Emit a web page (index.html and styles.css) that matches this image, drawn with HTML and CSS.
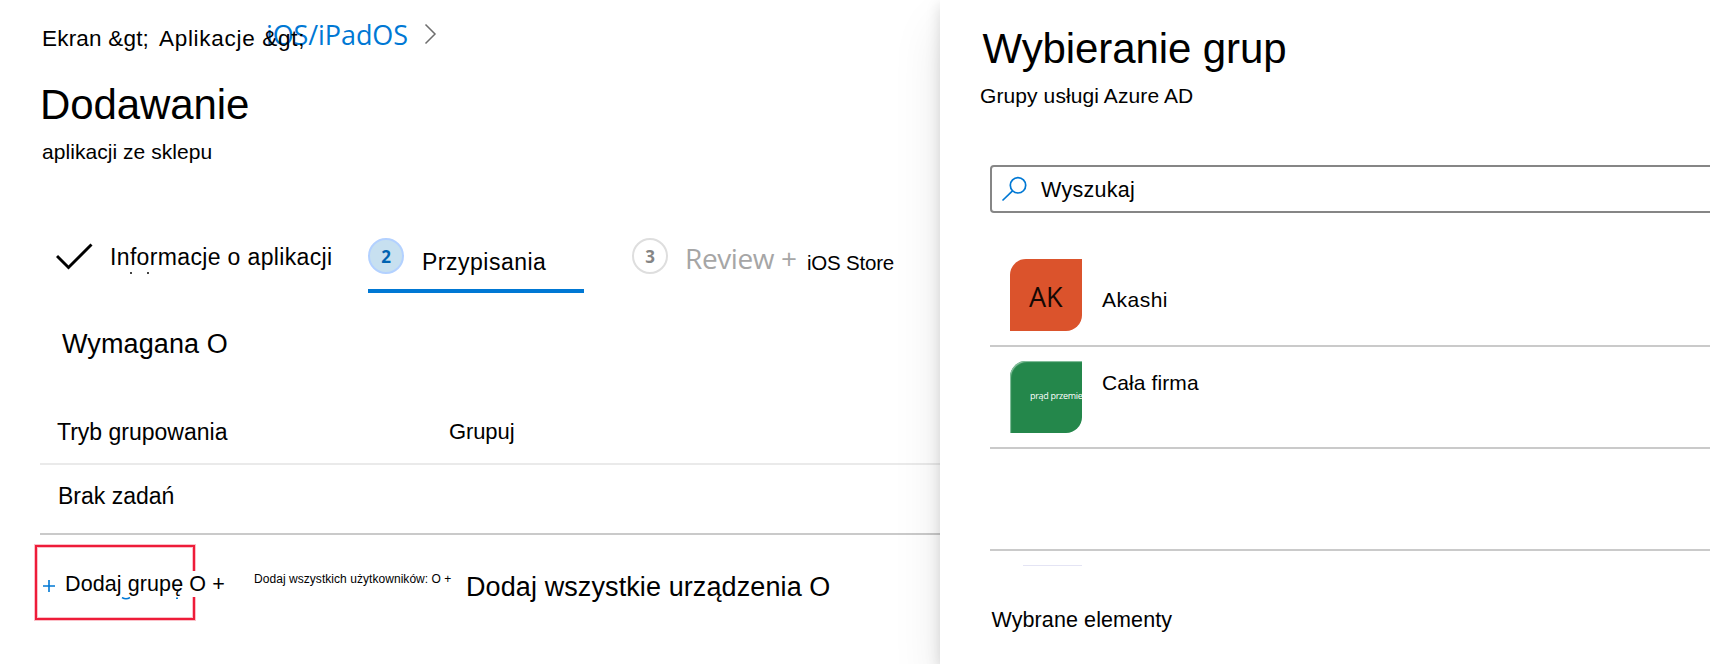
FILE: index.html
```html
<!DOCTYPE html>
<html lang="pl">
<head>
<meta charset="utf-8">
<title>Dodawanie aplikacji ze sklepu</title>
<link rel="stylesheet" href="styles.css">
</head>
<body>
<div class="page">
  <main class="main">
    <nav class="crumbs">
      <span class="crumb crumb-home">Ekran &amp;gt;</span>
      <span class="crumb crumb-apps">Aplikacje &amp;gt;</span>
      <a class="crumb-link">iOS/iPadOS</a>
      <svg class="chevron" width="14" height="22" viewBox="0 0 14 22"><path d="M1.5 1.5 L11 11 L1.5 20.5"/></svg>
    </nav>
    <h1 class="title">Dodawanie</h1>
    <p class="subtitle">aplikacji ze sklepu</p>

    <div class="steps">
      <div class="step step-info">
        <svg class="check" width="38" height="30" viewBox="0 0 38 30"><path d="M1 14 L12.5 25.5 L35.5 2.5"/></svg>
        <span class="step-label label-info">Informacje o aplikacji</span>
        <span class="descender descender-a"></span>
        <span class="descender descender-b"></span>
      </div>
      <div class="step step-assign">
        <span class="badge badge-active">2</span>
        <span class="step-label label-assign">Przypisania</span>
      </div>
      <div class="step step-review">
        <span class="badge">3</span>
        <span class="label-review">Review +</span>
        <span class="step-label label-store">iOS Store</span>
      </div>
    </div>

    <h2 class="section">Wymagana O</h2>

    <div class="table">
      <div class="row row-head">
        <span class="cell-mode">Tryb grupowania</span>
        <span class="cell-group">Grupuj</span>
      </div>
      <div class="row row-empty"><span class="cell-empty">Brak zadań</span></div>
    </div>

    <div class="actions">
      <div class="highlight"></div>
      <svg class="plus" width="12" height="12" viewBox="0 0 12 12"><path d="M6 0V12M0 6H12"/></svg>
      <span class="add-group">Dodaj grupę O +</span>
      <span class="add-users">Dodaj wszystkich użytkowników: O +</span>
      <span class="add-devices">Dodaj wszystkie urządzenia O</span>
      <svg class="underhang" width="62" height="5" viewBox="0 0 62 5"><path d="M1 0.5Q5 3 9 0.5M55 1.2H57"/></svg>
    </div>
  </main>

  <aside class="panel">
    <h1 class="panel-title">Wybieranie grup</h1>
    <p class="panel-subtitle">Grupy usługi Azure AD</p>
    <div class="search">
      <svg class="search-icon" width="27" height="27" viewBox="0 0 27 27"><circle cx="17" cy="9.3" r="7.7"/><path d="M11.5 14.8 L1.5 24.5"/></svg>
      <span class="search-text">Wyszukaj</span>
    </div>
    <div class="list">
      <div class="item">
        <div class="avatar avatar-ak"><span class="initials">AK</span></div>
        <span class="name name-ak">Akashi</span>
      </div>
      <div class="item">
        <div class="avatar avatar-all"><span class="caption">prąd przemienny</span></div>
        <span class="name name-all">Cała firma</span>
      </div>
      <div class="item"></div>
    </div>
    <div class="next-avatar"></div>
    <div class="selected">Wybrane elementy</div>
  </aside>
</div>
</body>
</html>
```
FILE: styles.css
```css
* { box-sizing: border-box; }
body { margin: 0; background: #fff; color: #000; font-family: "Liberation Sans", Arial, sans-serif; overflow: hidden; }
h1, h2, p { margin: 0; font-weight: 400; }
svg { fill: none; flex: none; display: block; }
span, a, h1, h2, p { white-space: nowrap; flex: none; }
.page { display: flex; width: 1710px; height: 664px; overflow: hidden; }

.main { width: 940px; flex: none; display: flex; flex-direction: column; }
.crumbs { display: flex; height: 80px; padding: 19px 0 0 42px; }
.crumb { position: relative; z-index: 1; margin-top: 5px; line-height: 30px; font-size: 22.5px; }
.crumb-home { width: 117px; letter-spacing: 0.2px; }
.crumb-apps { width: 107px; letter-spacing: 0.7px; }
.crumb-link { width: 158px; margin-top: 1px; font: 27px/30px "Open Sans", sans-serif; letter-spacing: -0.1px; color: #0078d4; }
.chevron { margin-top: 4px; stroke: #6e6e6e; stroke-width: 1.5; }
.title { padding-left: 40px; font-size: 42px; line-height: 50px; letter-spacing: -0.1px; }
.subtitle { margin-top: 7px; padding-left: 42px; font-size: 21px; line-height: 30px; letter-spacing: 0.05px; }

.steps { display: flex; margin-top: 71px; padding-left: 56px; height: 55px; }
.step { position: relative; display: flex; flex: none; }
.step-info { width: 312px; }
.check { margin-top: 4px; stroke: #000; stroke-width: 2.9; }
.step-label { line-height: 30px; font-size: 23px; }
.label-info { margin: 4px 0 0 16px; letter-spacing: 0.35px; }
.descender { position: absolute; top: 34px; width: 2px; height: 2px; background: #444; }
.descender-a { left: 74px; }
.descender-b { left: 91px; }
.step-assign { width: 216px; border-bottom: 4px solid #0078d4; }
.badge { width: 36px; height: 36px; border: 2px solid #dedede; border-radius: 50%; color: #858585; font: 700 17px/33px "Open Sans", sans-serif; text-align: center; }
.badge-active { border-color: #b3d1ff; background: #c7e0f0; color: #0063b1; }
.label-assign { margin: 9px 0 0 18px; letter-spacing: 0.5px; }
.step-review { margin-left: 48px; }
.label-review { width: 122px; margin: 5px 0 0 17px; font: 28px/30px "Open Sans", sans-serif; letter-spacing: -0.4px; color: #a6a6a6; }
.label-store { margin-top: 10px; font-size: 20.5px; letter-spacing: -0.2px; }

.section { margin-top: 36px; padding-left: 62px; font-size: 27px; line-height: 30px; letter-spacing: 0.1px; }
.table { margin: 48px 0 0 40px; }
.row { display: flex; }
.row-head { height: 58px; padding-top: 10px; border-bottom: 2px solid #eaeaea; }
.row-empty { height: 70px; padding-top: 16px; border-bottom: 2px solid #cacaca; }
.row span { line-height: 30px; font-size: 23px; }
.row .cell-mode { width: 409px; padding-left: 17px; }
.row .cell-group { font-size: 22px; letter-spacing: -0.1px; }
.row .cell-empty { padding-left: 18px; }

.actions { position: relative; display: flex; height: 129px; padding-left: 43px; }
.highlight { position: absolute; left: 35px; top: 10px; width: 160px; height: 75px; border: 2px solid #ee1c39; box-shadow: 0 0 0 1px #fbc0c8, inset 0 0 0 1px #fbc0c8; }
.plus { margin-top: 45px; stroke: #0078d4; stroke-width: 1.6; }
.add-group { position: relative; width: 189px; height: 26px; margin: 36px 0 0 10px; line-height: 27px; font-size: 21.5px; letter-spacing: 0.1px; background: linear-gradient(#fff, #fff) 110px 0 / 60px 26px no-repeat; }
.add-users { width: 212px; margin-top: 29px; line-height: 30px; font-size: 12px; letter-spacing: 0.05px; }
.add-devices { margin-top: 37px; line-height: 30px; font-size: 27px; letter-spacing: 0.1px; }
.underhang { position: absolute; left: 121px; top: 62px; stroke: #0078d4; stroke-width: 1.6; }

.panel { position: relative; flex: 1; background: #fff; box-shadow: 0 26px 48px rgba(0,0,0,.09), 0 5px 14px rgba(0,0,0,.14); }
.panel-title { padding: 24px 0 0 42.5px; font-size: 42px; line-height: 50px; letter-spacing: -0.1px; }
.panel-subtitle { margin-top: 7px; padding-left: 40px; font-size: 21px; line-height: 30px; letter-spacing: 0.1px; }
.search { display: flex; height: 48px; margin: 54px -4px 0 50px; border: 2px solid #868686; border-radius: 4px; }
.search-icon { margin: 9px 0 0 9px; stroke: #0078d4; stroke-width: 1.7; }
.search-text { margin: 8px 0 0 13px; line-height: 30px; font-size: 21.5px; letter-spacing: 0.3px; }
.list { margin: 34px 0 0 50px; }
.item { display: flex; height: 102px; padding: 14px 0 0 20px; border-bottom: 2px solid #cacaca; }
.item:first-child { height: 100px; padding-top: 12px; }
.avatar { width: 72px; height: 72px; border-radius: 16px 0 16px 0; overflow: hidden; flex: none; }
.avatar-ak { background: #db532c; }
.avatar-all { background: #24874b; box-shadow: inset 1px 1px 1px #8cc3a2; }
.initials { display: block; margin: 23px 0 0 19px; font: 27px/30px "Open Sans", sans-serif; color: #140804; }
.caption { display: block; margin: 20px 0 0 20px; font: 9px/30px "Open Sans", sans-serif; letter-spacing: -0.3px; color: #fff; }
.name { margin-left: 20px; line-height: 30px; font-size: 21px; }
.name-ak { margin-top: 26px; letter-spacing: 0.5px; }
.name-all { margin-top: 7px; letter-spacing: 0.1px; }
.next-avatar { width: 59px; height: 1px; margin: 14px 0 0 83px; background: #e4e4f4; }
.selected { margin-top: 39px; padding-left: 51.5px; line-height: 30px; font-size: 21.5px; letter-spacing: 0.1px; }
```
